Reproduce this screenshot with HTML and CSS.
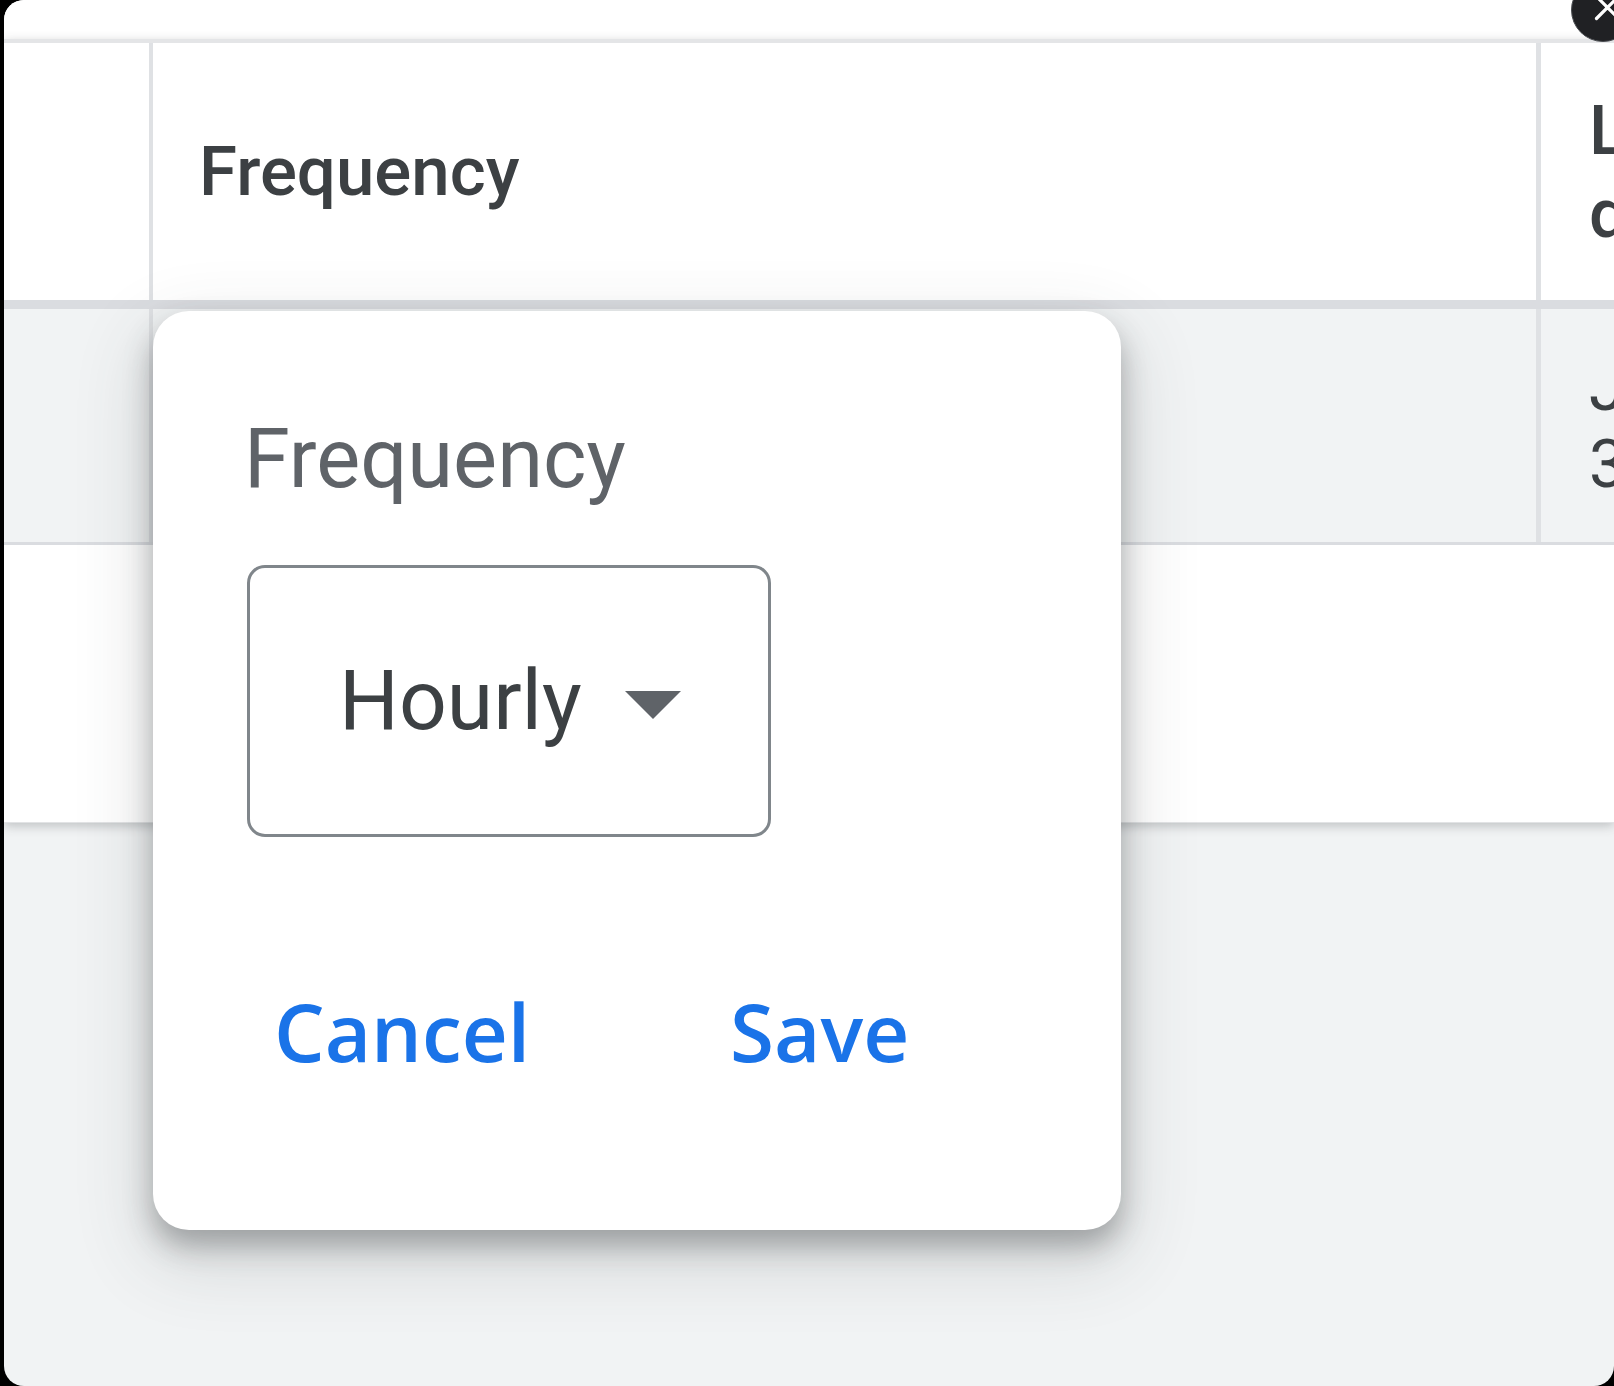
FILE: index.html
```html
<!DOCTYPE html>
<html lang="en">
<head>
<meta charset="utf-8">
<title>Scheduled reports – Frequency</title>
<link rel="stylesheet" href="styles.css">
</head>
<body>
<div class="window">
  <div class="topbar"></div>
  <div class="table">
    <div class="row head">
      <div class="cell c1"></div>
      <div class="cell c2"><span class="head-text">Frequency</span></div>
      <div class="cell c3 head-text"><span class="line">Last run</span><span class="line">date</span></div>
    </div>
    <div class="row body-row">
      <div class="cell c1"></div>
      <div class="cell c2"></div>
      <div class="cell c3 data-text"><span class="line">Jun 30, 2023</span><span class="line">3:00 PM</span></div>
    </div>
    <div class="table-empty"></div>
  </div>

  <div class="dialog" role="dialog" aria-label="Frequency">
    <div class="dialog-label">Frequency</div>
    <div class="select">
      <span class="select-value">Hourly</span>
      <svg class="select-arrow" width="56" height="28" viewBox="0 0 56 28" aria-hidden="true"><path d="M0 0H56L28 28Z" fill="#5f6368"/></svg>
    </div>
    <div class="actions">
      <button class="btn">Cancel</button>
      <button class="btn">Save</button>
    </div>
  </div>
</div>
<button class="close" aria-label="Close">
  <svg width="64" height="64" viewBox="0 0 64 64" aria-hidden="true"><path d="M25.5 18.5L47.5 40.5M25.5 40.5L47.5 18.5" stroke="#fff" stroke-width="3.2" stroke-linecap="round"/></svg>
</button>
</body>
</html>
```

FILE: styles.css
```css
html, body {
  margin: 0;
  padding: 0;
}
body {
  position: relative;
  width: 1614px;
  height: 1386px;
  overflow: hidden;
  background: #000;
  font-family: Roboto, "Liberation Sans", Arial, sans-serif;
}
.window {
  position: relative;
  margin-left: 4px;
  width: 1610px;
  height: 1386px;
  overflow: hidden;
  border-radius: 20px;
  background: #f1f3f4;
}
.topbar {
  height: 39px;
  background: #fff;
}
.table {
  background: #fff;
  box-shadow: 0 3px 10px rgba(60, 64, 67, 0.28);
  border-bottom: 1px solid #e2e3e5;
}
.row {
  display: grid;
  grid-template-columns: 149px 1388px 400px;
  box-sizing: border-box;
}
.head {
  height: 270px;
  border-top: 4px solid #e4e5e7;
  border-bottom: 9px solid #dadce0;
  background: #fff;
}
.body-row {
  height: 236px;
  border-bottom: 3px solid #dadce0;
  background: #f1f3f4;
}
.cell {
  box-sizing: border-box;
  display: flex;
  flex-direction: column;
  justify-content: center;
}
.c1 {
  border-right: 4px solid #dfe1e4;
}
.c2 {
  border-right: 5px solid #dfe1e4;
  padding-left: 46px;
}
.c3 {
  padding-left: 48px;
}
.line {
  display: block;
  white-space: nowrap;
}
.head-text {
  font-size: 69px;
  font-weight: 500;
  line-height: 83px;
  color: #3c4043;
}
.data-text {
  font-size: 66px;
  font-weight: 400;
  line-height: 77px;
  color: #3c4043;
}
.table-empty {
  height: 277px;
}
.dialog {
  position: absolute;
  left: 149px;
  top: 311px;
  width: 968px;
  height: 919px;
  box-sizing: border-box;
  padding: 100px 0 0 94px;
  background: #fff;
  border-radius: 36px;
  box-shadow: 0 16px 28px rgba(60, 64, 67, 0.38), 0 26px 70px 12px rgba(60, 64, 67, 0.14);
}
.dialog-label {
  font-size: 83px;
  line-height: 96px;
  font-weight: 400;
  color: #5f6368;
  margin-left: -3px;
}
.select {
  margin-top: 58px;
  width: 524px;
  height: 272px;
  box-sizing: border-box;
  border: 3px solid #80868b;
  border-radius: 18px;
  display: flex;
  align-items: center;
  padding-left: 89px;
}
.select-value {
  font-size: 84px;
  line-height: 96px;
  color: #3c4043;
}
.select-arrow {
  margin-left: 43px;
  margin-top: 8px;
  flex: none;
}
.actions {
  margin-top: 146px;
  padding-left: 27px;
  display: grid;
  grid-template-columns: 456px auto;
  justify-content: start;
}
.btn {
  font-family: "Open Sans", Roboto, "Liberation Sans", Arial, sans-serif;
  font-size: 80px;
  line-height: 96px;
  font-weight: 600;
  color: #1a73e8;
  background: none;
  border: 0;
  padding: 0;
  text-align: left;
  cursor: pointer;
}
.close {
  position: absolute;
  left: 1571px;
  top: -22px;
  width: 64px;
  height: 64px;
  padding: 0;
  border-radius: 50%;
  background: #202124;
  border: 1px solid #4a4d51;
  box-sizing: border-box;
  overflow: hidden;
}
.close svg {
  display: block;
  margin: -1px;
}
```
